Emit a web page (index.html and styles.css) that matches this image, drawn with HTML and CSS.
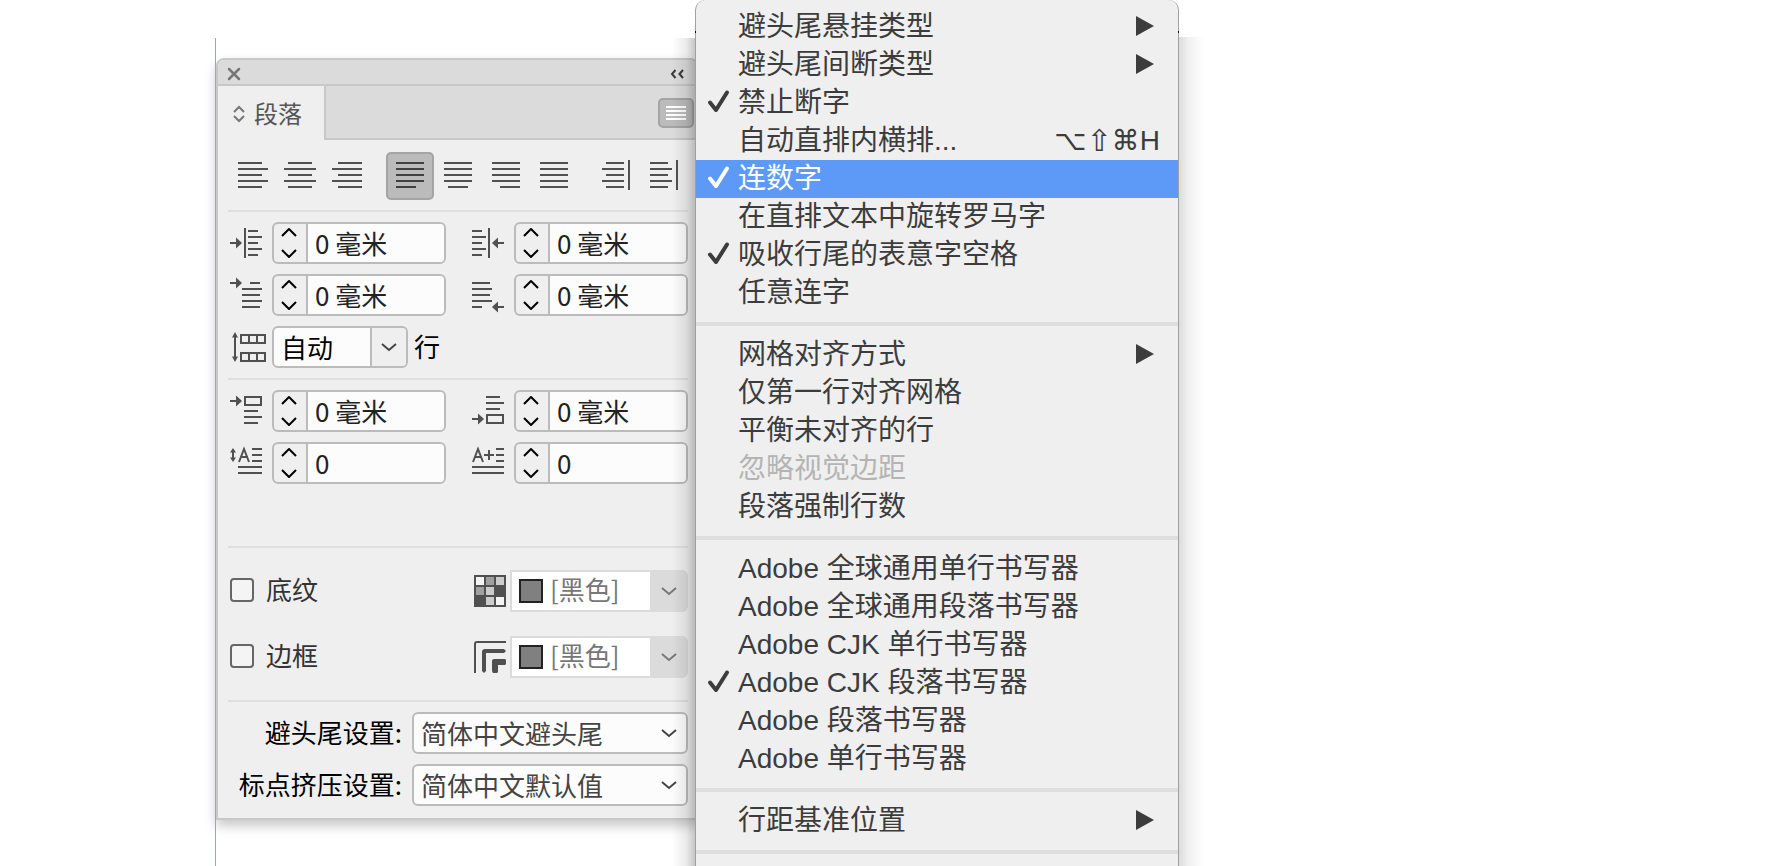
FILE: index.html
```html
<!DOCTYPE html>
<html lang="zh-CN">
<head>
<meta charset="utf-8">
<title>段落</title>
<link rel="stylesheet" href="styles.css">
</head>
<body>
<svg width="0" height="0" class="defs" aria-hidden="true">
  <symbol id="stepper" viewBox="0 0 32 38"><path d="M8 12l7-7 7 7M8 26l7 7 7-7"/></symbol>
  <symbol id="chevron" viewBox="0 0 16 10"><path d="M1 2l7 6 7-6"/></symbol>
  <symbol id="check" viewBox="0 0 24 24"><path d="M3 13.500l6 7.500L20 3.500"/></symbol>
</svg>
<main class="canvas">
  <div class="guide"></div>
  <section class="panel" aria-label="段落">
    <header class="titlebar">
      <button class="plain" aria-label="关闭"><svg width="14" height="14" viewBox="0 0 14 14"><path d="M2 2l10 10M12 2L2 12" stroke="#777" stroke-width="2.500" stroke-linecap="round"/></svg></button>
      <button class="plain" aria-label="折叠"><svg width="14" height="12" viewBox="0 0 14 12"><path d="M5.500 2L2 6l3.500 4M13 2L9.500 6 13 10" fill="none" stroke="#3a3a3a" stroke-width="2"/></svg></button>
    </header>
    <div class="tabs">
      <button class="tab"><svg width="12" height="18" viewBox="0 0 12 18"><path d="M1 7l5-5 5 5M1 11l5 5 5-5" fill="none" stroke="#777" stroke-width="2"/></svg><span>段落</span></button>
      <div class="tabfill"><button class="menubtn" aria-label="面板菜单"><svg width="20" height="14" viewBox="0 0 20 14"><path d="M0 1h20M0 5h20M0 9h20M0 13h20" stroke="#fff" stroke-width="2"/></svg></button></div>
    </div>
    <div class="body">
      <div class="aligns">
        <div class="group">
          <button aria-label="左对齐"><svg viewBox="0 0 44 44"><path d="M8 9h24M8 15h30M8 21h24M8 27h30M8 33h24"/></svg></button>
          <button aria-label="居中对齐"><svg viewBox="0 0 44 44"><path d="M10 9h24M6 15h32M10 21h24M6 27h32M10 33h24"/></svg></button>
          <button aria-label="右对齐"><svg viewBox="0 0 44 44"><path d="M12 9h24M6 15h30M12 21h24M6 27h30M12 33h24"/></svg></button>
        </div>
        <div class="group">
          <button class="on" aria-label="双齐末行齐左"><svg viewBox="0 0 44 44"><path d="M8 9h28M8 15h28M8 21h28M8 27h28M8 33h20"/></svg></button>
          <button aria-label="双齐末行居中"><svg viewBox="0 0 44 44"><path d="M8 9h28M8 15h28M8 21h28M8 27h28M12 33h20"/></svg></button>
          <button aria-label="双齐末行齐右"><svg viewBox="0 0 44 44"><path d="M8 9h28M8 15h28M8 21h28M8 27h28M16 33h20"/></svg></button>
          <button aria-label="全部强制双齐"><svg viewBox="0 0 44 44"><path d="M8 9h28M8 15h28M8 21h28M8 27h28M8 33h28"/></svg></button>
        </div>
        <div class="group">
          <button aria-label="朝向书脊对齐"><svg viewBox="0 0 44 44"><path d="M12 9h18M8 15h22M12 21h18M8 27h22M12 33h18M35 6v30"/></svg></button>
          <button aria-label="背向书脊对齐"><svg viewBox="0 0 44 44"><path d="M8 9h18M8 15h22M8 21h18M8 27h22M8 33h18M35 6v30"/></svg></button>
        </div>
      </div>

      <div class="section">
        <div class="fields">
          <label class="field"><svg class="ico" viewBox="0 0 36 32"><path d="M0 16h7M15 1v30M18 4h10M18 10h14M18 16h10M18 22h14M18 28h10"/><path class="f" d="M6 10.500l6 5.500-6 5.500z"/></svg>
            <span class="spin"><svg class="st"><use href="#stepper"/></svg><input type="text" value="0 毫米"></span></label>
          <label class="field"><svg class="ico" viewBox="0 0 36 32"><path d="M0 4h10M0 10h14M0 16h10M0 22h14M0 28h10M17 1v30M25 16h7"/><path class="f" d="M26 10.500L20 16l6 5.500z"/></svg>
            <span class="spin"><svg class="st"><use href="#stepper"/></svg><input type="text" value="0 毫米"></span></label>
          <label class="field"><svg class="ico" viewBox="0 0 36 32"><path d="M0 4h7M20 4h10M12 10h20M12 16h18M12 22h20M12 28h18"/><path class="f" d="M6-1.500L12 4 6 9.500z"/></svg>
            <span class="spin"><svg class="st"><use href="#stepper"/></svg><input type="text" value="0 毫米"></span></label>
          <label class="field"><svg class="ico" viewBox="0 0 36 32"><path d="M0 4h18M0 10h20M0 16h18M0 22h20M0 28h10M25 28h7"/><path class="f" d="M26 22.500L20 28l6 5.500z"/></svg>
            <span class="spin"><svg class="st"><use href="#stepper"/></svg><input type="text" value="0 毫米"></span></label>
        </div>
        <div class="field"><svg class="ico" viewBox="0 0 36 32"><path d="M5 5v22M11 4h24v8H11zM19 4v8M27 4v8M11 22h24v8H11zM19 22v8M27 22v8"/><path class="f" d="M2 6.500L5 1l3 5.500zM2 25.500L5 31l3-5.500z"/></svg>
          <span class="pick auto"><select id="lines"><option>自动</option></select><svg class="cv"><use href="#chevron"/></svg></span><label for="lines">行</label></div>
      </div>

      <div class="section tall">
        <div class="fields">
          <label class="field"><svg class="ico" viewBox="0 0 36 32"><path d="M0 6h7M15 2h16v8H15zM14 16h14M14 22h18M14 28h14"/><path class="f" d="M6 .500L12 6l-6 5.500z"/></svg>
            <span class="spin"><svg class="st"><use href="#stepper"/></svg><input type="text" value="0 毫米"></span></label>
          <label class="field"><svg class="ico" viewBox="0 0 36 32"><path d="M0 24h7M15 20h16v8H15zM14 2h14M14 8h18M14 14h14"/><path class="f" d="M6 18.500l6 5.500-6 5.500z"/></svg>
            <span class="spin"><svg class="st"><use href="#stepper"/></svg><input type="text" value="0 毫米"></span></label>
          <label class="field"><svg class="ico" viewBox="0 0 36 32"><path d="M3 5v6M22 2h10M22 8h10M22 14h10M8 20h24M8 26h24M9 15L14 2l5 13M11 10h7"/><path class="f" d="M0 5.500L3 1l3 4.500zM0 10.500L3 15l3-4.500z"/></svg>
            <span class="spin"><svg class="st"><use href="#stepper"/></svg><input type="text" value="0"></span></label>
          <label class="field"><svg class="ico" viewBox="0 0 36 32"><path d="M1 15L6 2l5 13M3 10h7M12 8h10M17 3v10M24 2h8M24 8h8M24 14h8M0 20h32M0 26h32"/></svg>
            <span class="spin"><svg class="st"><use href="#stepper"/></svg><input type="text" value="0"></span></label>
        </div>
      </div>

      <div class="section paint">
        <div class="paintrow">
          <label class="tick"><input type="checkbox"><span>底纹</span></label>
          <svg width="32" height="32" viewBox="0 0 32 32"><path fill="#505050" d="M0 0h32v32H0z"/><path fill="#f4f4f4" d="M2 2h8v8H2zM22 22h8v8h-8z"/><path fill="#a0a0a0" d="M12 2h8v8h-8zM2 12h8v8H2z"/><path fill="#ccc" d="M22 2h8v8h-8zM12 12h8v8h-8zM12 22h8v8h-8z"/></svg>
          <span class="pick off"><i class="swatch"></i><select disabled aria-label="底纹颜色"><option>[黑色]</option></select><svg class="cv"><use href="#chevron"/></svg></span>
        </div>
        <div class="paintrow">
          <label class="tick"><input type="checkbox"><span>边框</span></label>
          <svg width="32" height="32" viewBox="0 0 32 32"><path d="M1 32V3q0-2 2-2h29" fill="none" stroke="#505050" stroke-width="2"/><path fill="#505050" d="M8 30V11q0-3 3-3h19l2 2v0l-2 2H12v18l-2 2zM18 30V20q0-2 2-2h11l1 1v4l-1 1h-7v7l-1 1h-4z"/></svg>
          <span class="pick off"><i class="swatch"></i><select disabled aria-label="边框颜色"><option>[黑色]</option></select><svg class="cv"><use href="#chevron"/></svg></span>
        </div>
      </div>

      <div class="section settings">
        <label for="kinsoku">避头尾设置:</label>
        <span class="pick"><select id="kinsoku"><option>简体中文避头尾</option></select><svg class="cv"><use href="#chevron"/></svg></span>
        <label for="mojikumi">标点挤压设置:</label>
        <span class="pick"><select id="mojikumi"><option>简体中文默认值</option></select><svg class="cv"><use href="#chevron"/></svg></span>
      </div>
    </div>
  </section>

  <nav class="menu" aria-label="面板菜单">
    <button><span>避头尾悬挂类型</span><i class="arrow"></i></button>
    <button><span>避头尾间断类型</span><i class="arrow"></i></button>
    <button><svg class="ck"><use href="#check"/></svg><span>禁止断字</span></button>
    <button><span>自动直排内横排...</span><kbd><i>⌥</i><i class="shift">⇧</i><i>⌘</i>H</kbd></button>
    <button class="hot"><svg class="ck"><use href="#check"/></svg><span>连数字</span></button>
    <button><span>在直排文本中旋转罗马字</span></button>
    <button><svg class="ck"><use href="#check"/></svg><span>吸收行尾的表意字空格</span></button>
    <button><span>任意连字</span></button>
    <hr>
    <button><span>网格对齐方式</span><i class="arrow"></i></button>
    <button><span>仅第一行对齐网格</span></button>
    <button><span>平衡未对齐的行</span></button>
    <button disabled><span>忽略视觉边距</span></button>
    <button><span>段落强制行数</span></button>
    <hr>
    <button><span>Adobe 全球通用单行书写器</span></button>
    <button><span>Adobe 全球通用段落书写器</span></button>
    <button><span>Adobe CJK 单行书写器</span></button>
    <button><svg class="ck"><use href="#check"/></svg><span>Adobe CJK 段落书写器</span></button>
    <button><span>Adobe 段落书写器</span></button>
    <button><span>Adobe 单行书写器</span></button>
    <hr>
    <button><span>行距基准位置</span><i class="arrow"></i></button>
    <hr>
  </nav>
</main>
</body>
</html>
```

FILE: styles.css
```css
* { box-sizing: border-box; }
html, body { height: 100%; }
body {
  margin: 0;
  background: #fff;
  font-family: "Noto Sans CJK SC", sans-serif;
  overflow: hidden;
}
button, input, select { font: inherit; color: inherit; margin: 0; }
button { border: 0; background: none; padding: 0; }
.defs { position: absolute; }

/* free canvas: the panel and its open menu float over the page guide */
.canvas { position: relative; height: 100vh; overflow: hidden; }
.guide {
  position: absolute; left: 215px; top: 38px; bottom: 0; width: 1px;
  background: #9a9af0; z-index: 2;
}
.panel {
  position: absolute; left: 216px; top: 58px; width: 482px;
  border: 2px solid #c8c8c8; border-radius: 8px 8px 0 0;
  background: #efefef;
  box-shadow: 0 6px 12px rgba(0, 0, 0, .22);
  font-size: 26px;
}

.titlebar {
  display: flex; justify-content: space-between; align-items: center;
  height: 26px; padding: 3px 12px 0 9px;
  background: #dbdbdb; border-bottom: 2px solid #c8c8c8;
  border-radius: 6px 6px 0 0;
}
.plain { display: flex; }
.tabs { display: flex; height: 54px; }
.tab {
  display: flex; align-items: center; gap: 9px;
  width: 106px; padding: 2px 0 0 15px;
  font-size: 24px; color: #555;
}
.tab span { padding-bottom: 4px; }
.tabfill {
  flex: 1; display: flex; align-items: center; justify-content: flex-end;
  padding: 2px 2px 0 0;
  background: #dbdbdb; border: solid #c8c8c8; border-width: 0 0 2px 2px;
}
.menubtn {
  display: flex; align-items: center; justify-content: center;
  width: 36px; height: 30px;
  border: 2px solid #a4a4a4; border-radius: 5px; background: #bbb;
}

.body { padding: 12px 8px 12px 10px; }
.aligns { display: flex; gap: 14px; padding-bottom: 10px; }
.group { display: flex; }
.group button { width: 48px; height: 48px; border: 2px solid transparent; border-radius: 5px; }
.group svg { display: block; width: 44px; height: 44px; fill: none; stroke: #505050; stroke-width: 2; }
.group .on { background: #bbb; border-color: #a4a4a4; }
.group .on svg { stroke: #404040; }

.section { border-top: 2px solid #dfdfdf; padding: 10px 0; }
.fields { display: grid; grid-template-columns: 218px 218px; column-gap: 24px; row-gap: 10px; }
.fields + .field { margin-top: 10px; }
.field { display: flex; align-items: center; height: 42px; }
.ico { flex: none; width: 36px; height: 32px; margin: 0 6px 0 2px; overflow: visible; fill: none; stroke: #505050; stroke-width: 2; }
.ico .f { fill: #505050; stroke: none; }
.spin {
  display: flex; flex: 1; height: 42px;
  border: 2px solid #bbb; border-radius: 6px; background: #efefef; overflow: hidden;
}
.st { width: 32px; height: 38px; flex: none; fill: none; stroke: #000; stroke-width: 2; stroke-linejoin: round; }
.spin input {
  flex: 1; min-width: 0; border: 0; border-left: 2px solid #bbb;
  padding: 0 0 2px 7px; background: #fcfcfc; color: #222; outline: 0;
}
.field > label { margin-left: 6px; padding-bottom: 3px; }

.pick {
  display: flex; align-items: center; position: relative; height: 42px;
  border: 2px solid #bbb; border-radius: 6px; background: #fcfcfc; overflow: hidden;
}
.pick select {
  appearance: none; flex: 1; min-width: 0; height: 38px;
  border: 0; padding: 0 0 3px 7px; background: none; color: #444; opacity: 1; outline: 0;
}
.cv {
  flex: none; width: 16px; height: 10px; margin: 0 9px;
  fill: none; stroke: #444; stroke-width: 2; pointer-events: none;
}
.pick.auto { width: 136px; }
.pick.auto select { color: #000; }
.pick.auto::after {
  content: ""; position: absolute; right: 0; top: 0; bottom: 0; width: 34px;
  border-left: 2px solid #bbb; background: #efefef;
}
.pick.auto .cv { z-index: 1; }

.tall { padding-bottom: 62px; }
.paint { display: grid; row-gap: 24px; padding: 22px 0; }
.paintrow { display: flex; align-items: center; }
.tick {
  display: flex; align-items: center; gap: 12px; flex: 1;
  padding: 0 0 2px 2px; line-height: 32px; color: #333;
}
.tick span { padding-bottom: 3px; }
.tick input {
  appearance: none; width: 24px; height: 24px; margin: 0;
  border: 2px solid #666; border-radius: 4px; background: #f4f4f4;
}
.pick.off {
  width: 178px; margin-left: 4px; border-color: #dbdbdb; border-radius: 0 6px 6px 0;
  background: linear-gradient(90deg, #fff 138px, #dbdbdb 138px);
}
.pick.off select { height: 34px; margin-bottom: 4px; padding-bottom: 0; line-height: 34px; color: #777; }
.pick.off .cv { stroke: #777; }
.swatch { width: 24px; height: 24px; margin-left: 7px; border: 2px solid #222; background: #808080; }

.settings {
  display: grid; grid-template-columns: 1fr 276px; align-items: center;
  column-gap: 10px; row-gap: 10px; padding-bottom: 0; text-align: right;
}
.settings label { padding-bottom: 3px; }

.menu {
  position: absolute; left: 695px; top: 0; width: 484px; min-height: 100%;
  padding-top: 8px;
  border: solid #a0a0a0; border-width: 0 1px; border-radius: 10px 10px 0 0;
  background: #efefef;
  font-family: "Liberation Sans", "Noto Sans CJK SC", sans-serif;
  font-size: 28px; color: #3c3c3c; z-index: 3;
}
/* side shadows, which start below the top edge of the window */
.menu::before, .menu::after {
  content: ""; position: absolute; top: 31px; bottom: 0; width: 32px;
  background-repeat: no-repeat; pointer-events: none;
}
.menu::before {
  right: 482px;
  background-image: linear-gradient(#111, #111), linear-gradient(270deg, transparent 1px, rgba(0, 0, 0, .22) 1px, rgba(0, 0, 0, .08) 10px, transparent 24px);
  background-size: 1px 2px, 100% 100%;
  background-position: 100% 0, 0 7px;
}
.menu::after {
  left: 482px;
  background-image: linear-gradient(#111, #111), linear-gradient(90deg, transparent 1px, rgba(0, 0, 0, .14) 1px, rgba(0, 0, 0, .06) 10px, transparent 26px);
  background-size: 1px 2px, 100% 100%;
  background-position: 0 0, 0 6px;
}
.menu button {
  display: flex; align-items: center; position: relative;
  width: 100%; height: 38px; padding: 0 18px 0 42px;
  line-height: 38px; text-align: left;
}
.menu span { flex: 1; }
.menu button:disabled { color: #b4b4b4; }
.menu .hot { background: #5d9af7; color: #fff; }
.menu hr { height: 4px; margin: 10px 0; border: 0; background: #dedede; }
.ck {
  position: absolute; left: 11px; top: 5px; width: 24px; height: 24px;
  fill: none; stroke: currentColor; stroke-width: 4; stroke-linecap: round; stroke-linejoin: round;
}
.arrow {
  margin: 0 6px 2px 0;
  border: solid transparent; border-width: 10px 0 10px 18px; border-left-color: #3c3c3c;
}
kbd { display: flex; font-family: inherit; }
kbd i { font-family: "DejaVu Sans", sans-serif; font-style: normal; }
kbd .shift { font-size: 30px; }
```
